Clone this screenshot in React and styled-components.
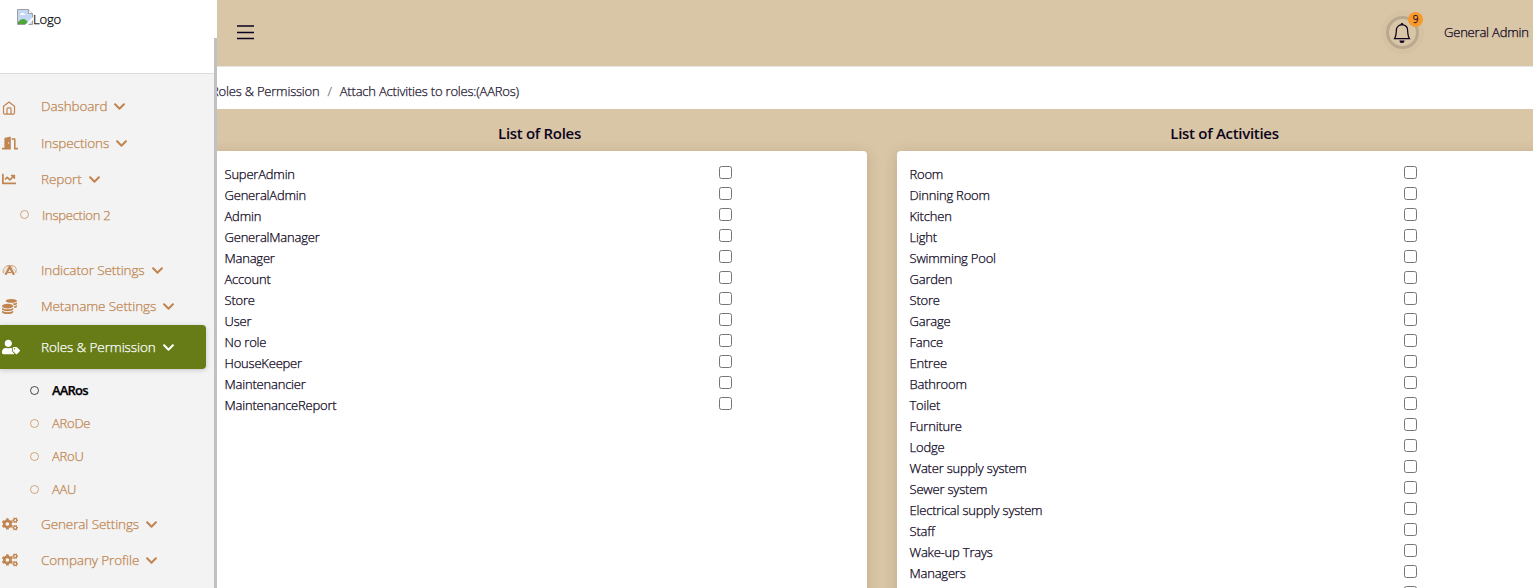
import React from "react";
import styled, { createGlobalStyle } from "styled-components";
import {
  FaDoorOpen,
  FaChartLine,
  FaCoins,
  FaUserTag,
  FaCogs,
  FaChevronDown,
} from "react-icons/fa";
import { BsBell } from "react-icons/bs";

const tan = "#d9c6a6";
const brown = "#c08550";

const GlobalStyle = createGlobalStyle`
  * { box-sizing: border-box; }
  html, body { margin: 0; height: 588px; overflow: hidden; }
  body {
    background: ${tan};
    color: #0c0320;
    font-family: "Open Sans", "Lato", sans-serif;
    font-size: 13px;
    font-weight: 300;
    letter-spacing: -0.2px;
    -webkit-text-stroke: 0.25px currentColor;
  }
`;

const Page = styled.div`
  display: flex;
  height: 588px;
  overflow: hidden;
`;

const Sidebar = styled.aside`
  display: grid;
  grid-template-columns: 214px 3px;
  width: 217px;
  flex: none;
  z-index: 1;
`;

const SidebarBody = styled.div`
  background: #f3f3f3;
`;

const Brand = styled.div`
  display: flex;
  align-items: flex-start;
  height: 74px;
  padding: 9px 0 0 17px;
  background: #fff;
  border-bottom: 1px solid #dcdcdc;
  line-height: 20px;
  color: #000;
`;

const Track = styled.div`
  padding-top: 38px;
  background: #fff;
`;

const Thumb = styled.div`
  height: 550px;
  background: #c1c1c1;
`;

const Nav = styled.nav`
  display: flex;
  flex-direction: column;
  padding-top: 14px;
`;

const NavItem = styled.a`
  display: flex;
  align-items: center;
  flex: none;
  width: 206px;
  height: ${(p) => p.$h || 36}px;
  padding-left: 2px;
  border-radius: 0 4px 4px 0;
  font-size: 13.5px;
  letter-spacing: -0.1px;
  color: ${(p) => (p.$active ? "#fff" : brown)};
  background: ${(p) => (p.$active ? "#677c17" : "transparent")};
  box-shadow: ${(p) => (p.$active ? "0 1px 5px rgba(0,0,0,.2)" : "none")};
`;

const NavIcon = styled.span`
  display: flex;
  align-items: center;
  width: 39px;
  font-size: ${(p) => p.$size || 16}px;
`;

const NavText = styled.span`
  margin-right: 6px;
  padding-bottom: ${(p) => (p.$raised ? 1 : 0)}px;
  white-space: nowrap;
`;

const SubItem = styled.a`
  display: flex;
  align-items: center;
  flex: none;
  height: ${(p) => p.$h || 33}px;
  margin-bottom: ${(p) => p.$gap || 0}px;
  padding: 0 0 1px ${(p) => p.$indent || 30}px;
  gap: 13px;
  color: ${(p) => (p.$active ? "#000" : brown)};
  font-weight: ${(p) => (p.$active ? 600 : 300)};
  letter-spacing: ${(p) => (p.$active ? -0.8 : -0.25)}px;
`;

const SubList = styled.div`
  display: flex;
  flex-direction: column;
  padding-top: 5px;
`;

const Bullet = styled.i`
  width: 9px;
  height: 9px;
  border: 1px solid currentColor;
  border-radius: 50%;
  opacity: 0.7;
`;

const Main = styled.main`
  flex: 1;
  min-width: 0;
  overflow: hidden;
`;

const Topbar = styled.header`
  display: flex;
  align-items: center;
  height: 67px;
  padding: 0 5px 2px 20px;
  border-bottom: 1px solid #e4e4e4;
  background: ${tan};
`;

const Spacer = styled.div`
  flex: 1;
`;

const BellRing = styled.div`
  position: relative;
  display: grid;
  place-items: center;
  width: 33px;
  height: 33px;
  margin-right: 25px;
  border: 3px solid #b9a88d;
  border-radius: 50%;
  box-shadow: 0 0 0 5px rgba(185, 168, 141, 0.13);
  font-size: 20px;
`;

const BellIcon = styled(BsBell)`
  margin: 2px 2px 0 0;
`;

const UserName = styled.span`
  width: 84px;
  white-space: nowrap;
`;

const Badge = styled.span`
  position: absolute;
  top: -7px;
  right: -7px;
  width: 15px;
  height: 15px;
  border-radius: 50%;
  background: #f7992b;
  font-size: 10px;
  line-height: 15px;
  text-align: center;
`;

const Breadcrumb = styled.div`
  display: flex;
  align-items: center;
  gap: 8px;
  height: 42px;
  padding-top: 6px;
  background: #fff;
  white-space: nowrap;
`;

const Crumb = styled.span`
  margin-left: ${(p) => p.$shift || 0}px;
  color: ${(p) => (p.$muted ? "#6c757d" : "#1c1330")};
`;

const Columns = styled.div`
  display: grid;
  grid-template-columns: 655px 655px;
  gap: 30px;
  margin-left: -5px;
`;

const Column = styled.section`
  display: flex;
  flex-direction: column;
`;

const Title = styled.h6`
  margin: 0;
  height: 42px;
  padding-top: 4px;
  font-size: 15px;
  font-weight: 600;
  line-height: 40px;
  letter-spacing: -0.3px;
  text-align: center;
  -webkit-text-stroke: 0;
`;

const Card = styled.div`
  height: 460px;
  padding: 13px 12px 0 12.5px;
  border-radius: 4px;
  background: #fff;
  box-shadow: 0 2px 14px rgba(60, 40, 0, 0.16);
`;

const Row = styled.label`
  display: grid;
  grid-template-columns: 494.5px 1fr;
  height: 21px;
  line-height: 21px;
  white-space: nowrap;
`;

const Check = styled.input`
  width: 13px;
  height: 13px;
  margin: 2px 0 0;
`;

const roles = [
  "SuperAdmin", "GeneralAdmin", "Admin", "GeneralManager", "Manager", "Account",
  "Store", "User", "No role", "HouseKeeper", "Maintenancier", "MaintenanceReport",
];

const activities = [
  "Room", "Dinning Room", "Kitchen", "Light", "Swimming Pool", "Garden", "Store",
  "Garage", "Fance", "Entree", "Bathroom", "Toilet", "Furniture", "Lodge",
  "Water supply system", "Sewer system", "Electrical supply system", "Staff",
  "Wake-up Trays", "Managers", "",
];

const HomeIcon = () => (
  <svg width="14" height="16" viewBox="0 -2 14 16" fill="none" stroke="currentColor" strokeWidth="1.2">
    <path d="M1.5 5.2 7 1l5.5 4.2v6.6q0 1.4-1.4 1.4H2.9q-1.4 0-1.4-1.4z" />
    <path d="M5 13V7.8q0-1 1-1h2q1 0 1 1V13" />
  </svg>
);

const OrbitIcon = () => (
  <svg width="16" height="12" viewBox="0 0 16 12" fill="none" stroke="currentColor">
    <path d="M2 9.500Q-.5 6 2.500 3.500T10 1.500q4 .5 4.300 3.500T12.500 9.500" strokeWidth=".8" opacity=".8" />
    <path d="M1 8.500Q5 2.500 11 2M14.500 8.500Q11.500 3 4.500 1.500" strokeWidth=".6" opacity=".7" />
    <path d="M3.500 10.800 7.700 3 12 10.800" strokeWidth="2.200" />
    <path d="M6 8.500h3.500" strokeWidth="1.200" />
  </svg>
);

const MenuIcon = () => (
  <svg width="17" height="16" viewBox="0 0 17 16" stroke="currentColor" strokeWidth="1.6">
    <path d="M0 2h17M0 8.5h17M0 14.5h17" />
  </svg>
);

const BrokenImage = () => (
  <svg width="16" height="16" viewBox="0 0 16 16">
    <path d="M.5.5h11l4 4v11H.5z" fill="#c3d6f5" stroke="#a0a0a0" />
    <path d="M11.5.5v4h4" fill="#fff" stroke="#a0a0a0" />
    <path d="M3 6q0-2 2-2 1-1 2 .5Q9 4.500 8.500 6z" fill="#fff" />
    <path d="M1 15v-2q4-5 8-2l3 4z" fill="#4fa53a" />
    <path d="M8 16l8-8v3l-5 5z" fill="#fff" />
  </svg>
);

function MenuItem({ icon, label, h, active, size, raised }) {
  return (
    <NavItem $h={h} $active={active}>
      <NavIcon $size={size}>{icon}</NavIcon>
      <NavText $raised={raised}>{label}</NavText>
      <FaChevronDown size={13} />
    </NavItem>
  );
}

function Checklist({ title, items }) {
  return (
    <Column>
      <Title>{title}</Title>
      <Card>
        {items.map((name) => (
          <Row key={name}>
            <span>{name}</span>
            <Check type="checkbox" />
          </Row>
        ))}
      </Card>
    </Column>
  );
}

export default function App() {
  return (
    <Page>
      <GlobalStyle />
      <Sidebar>
        <SidebarBody>
          <Brand><BrokenImage />Logo</Brand>
          <Nav>
            <MenuItem icon={<HomeIcon />} label="Dashboard" h={37} raised />
            <MenuItem icon={<FaDoorOpen />} label="Inspections" />
            <MenuItem icon={<FaChartLine />} label="Report" size={14} />
            <SubItem $h={36} $indent={20} $gap={19}><Bullet />Inspection 2</SubItem>
            <MenuItem icon={<OrbitIcon />} label="Indicator Settings" />
            <MenuItem icon={<FaCoins />} label="Metaname Settings" h={37} size={15} raised />
            <MenuItem icon={<FaUserTag />} label="Roles & Permission" h={44} size={18} active />
            <SubList>
              <SubItem $active><Bullet />AARos</SubItem>
              <SubItem><Bullet />ARoDe</SubItem>
              <SubItem><Bullet />ARoU</SubItem>
              <SubItem><Bullet />AAU</SubItem>
            </SubList>
            <MenuItem icon={<FaCogs />} label="General Settings" />
            <MenuItem icon={<FaCogs />} label="Company Profile" />
          </Nav>
        </SidebarBody>
        <Track><Thumb /></Track>
      </Sidebar>
      <Main>
        <Topbar>
          <MenuIcon />
          <Spacer />
          <BellRing><BellIcon /><Badge>9</Badge></BellRing>
          <UserName>General Admin</UserName>
        </Topbar>
        <Breadcrumb>
          <Crumb $shift={-6}>Roles &amp; Permission</Crumb>
          <Crumb $muted>/</Crumb>
          <Crumb>Attach Activities to roles:(AARos)</Crumb>
        </Breadcrumb>
        <Columns>
          <Checklist title="List of Roles" items={roles} />
          <Checklist title="List of Activities" items={activities} />
        </Columns>
      </Main>
    </Page>
  );
}
